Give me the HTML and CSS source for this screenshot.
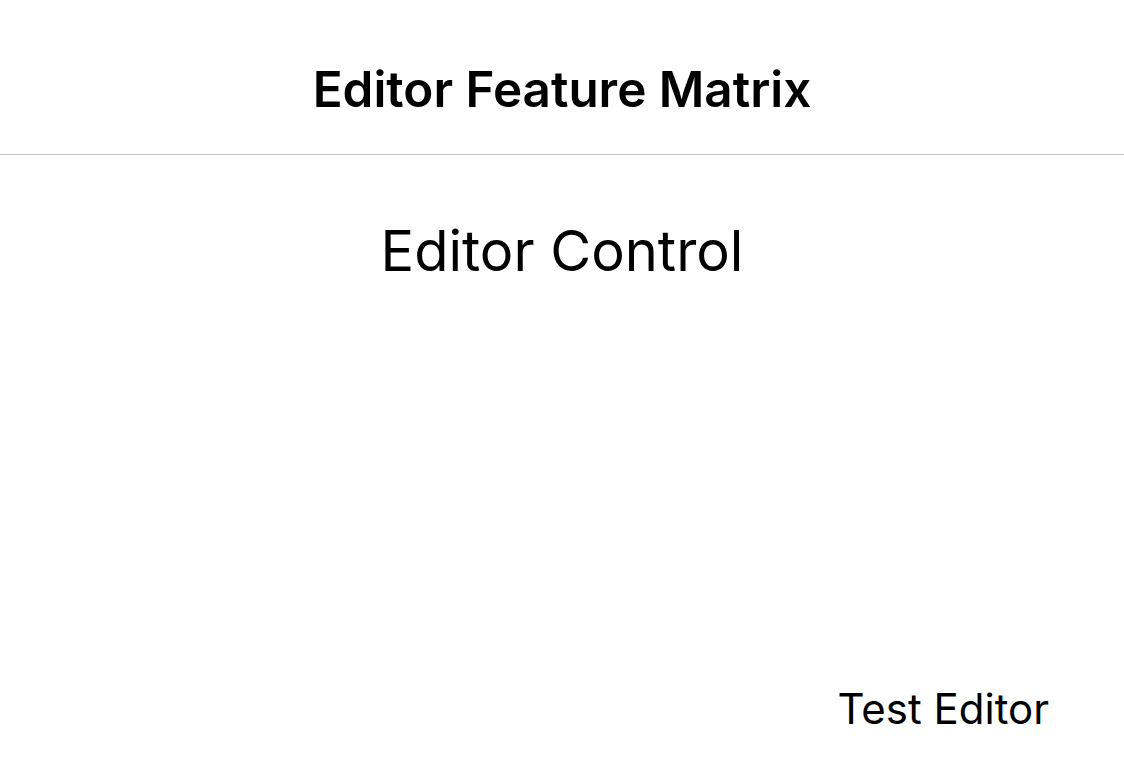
FILE: index.html
```html
<!DOCTYPE html>
<html>
<head>
<meta charset="utf-8">
<link rel="stylesheet" href="styles.css">
</head>
<body>
<div class="page">
  <header class="header">
    <h1 class="title">Editor Feature Matrix</h1>
  </header>
  <main class="content">
    <div class="control">Editor Control</div>
    <div class="footer">
      <span class="test">Test Editor</span>
    </div>
  </main>
</div>
</body>
</html>
```
FILE: styles.css
```css
html, body {
  margin: 0;
  padding: 0;
  background: #ffffff;
  color: #000000;
  font-family: Inter, "Noto Sans", sans-serif;
}
.page {
  width: 1124px;
  height: 776px;
  display: flex;
  flex-direction: column;
}
.header {
  height: 155px;
  border-bottom: 1px solid #c4c4c4;
  display: flex;
  align-items: center;
  justify-content: center;
  box-sizing: border-box;
}
.title {
  margin: 0;
  font-size: 49.4px;
  font-weight: 600;
  padding-top: 24px;
}
.content {
  flex: 1;
  display: flex;
  flex-direction: column;
}
.control {
  text-align: center;
  font-size: 56px;
  font-weight: 400;
  padding-top: 62px;
}
.footer {
  margin-top: auto;
  display: flex;
  justify-content: flex-end;
  padding: 0 75px 42px 0;
}
.test {
  font-size: 42px;
}
```
